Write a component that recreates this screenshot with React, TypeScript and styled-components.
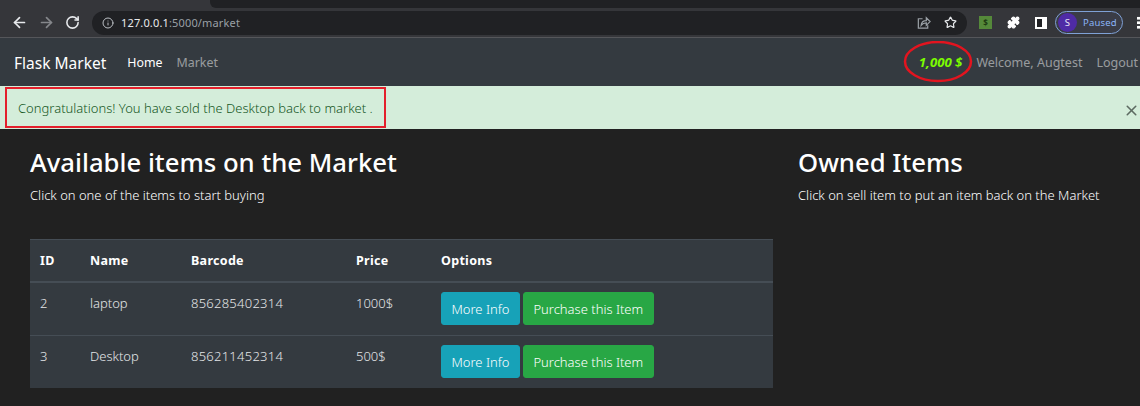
import { FC } from "react";
import styled, { createGlobalStyle } from "styled-components";
import { ArrowLeft, ArrowRight, RotateCw, Info, Star, Puzzle, X } from "lucide-react";

const GlobalStyle = createGlobalStyle`
	html, body {
		margin: 0;
		padding: 0;
		height: 406px;
		overflow: hidden;
		background-color: #212121;
		font-family: "Noto Sans", "Open Sans", sans-serif;
		color: #fff;
	}
	* {
		box-sizing: border-box;
	}
`;

const TabStrip = styled.div`
	height: 8px;
	display: flex;
	background-color: #35363a;
`;

const ActiveTab = styled.div`
	margin-left: 210px;
	background-color: #202124;
	border-radius: 0 0 0 6px;
	flex: 1;
`;

const Toolbar = styled.div`
	height: 30px;
	display: flex;
	align-items: center;
	padding: 0 0 0 11px;
	background-color: #35363a;
	border-bottom: 1px solid #55565a;
	overflow: hidden;
	& > * {
		flex-shrink: 0;
	}
`;

const NavIcons = styled.div`
	display: flex;
	align-items: center;
	gap: 10px;
	width: 81px;
	color: #e8eaed;
`;

const Omnibox = styled.div`
	width: 875px;
	height: 24px;
	display: flex;
	align-items: center;
	padding: 0 10px 0 10px;
	border-radius: 12px;
	background-color: #202124;
	color: #bdc1c6;
`;

const Url = styled.span`
	margin-left: 7px;
	flex: 1;
	font-size: 11px;
	letter-spacing: 0.15px;
	color: #9aa0a6;

	b {
		font-weight: 400;
		color: #e8eaed;
	}
`;

const OmniActions = styled.div`
	display: flex;
	align-items: center;
	gap: 13px;
`;

const Extensions = styled.div`
	display: flex;
	align-items: center;
	margin-left: 12px;
	gap: 15px;
	color: #fff;
`;

const ExtensionBadge = styled.div`
	width: 13px;
	height: 13px;
	display: flex;
	align-items: center;
	justify-content: center;
	font-size: 8px;
	font-weight: 700;
	color: #1d3b12;
	background-color: #55893a;
`;

const SidePanelIcon = styled.div`
	width: 12px;
	height: 12px;
	border: 2px solid #fff;
	border-right-width: 5px;
	background-color: #202124;
`;

const ProfilePill = styled.div`
	width: 68px;
	height: 23px;
	margin-left: 8px;
	display: flex;
	align-items: center;
	gap: 6px;
	padding-left: 2px;
	border: 1px solid #7fa1d6;
	border-radius: 12px;
	font-size: 9.5px;
	letter-spacing: 0.2px;
	color: #8ab4f8;
	background-color: #3a3c46;
`;

const ProfileAvatar = styled.div`
	width: 19px;
	height: 19px;
	display: flex;
	align-items: center;
	justify-content: center;
	border-radius: 50%;
	color: #e8e3f5;
	background-color: #4f2ba6;
`;

const KebabDots = styled.div`
	margin-left: 14px;
	width: 3px;
	height: 13px;
	background: radial-gradient(circle, #fff 1.4px, transparent 1.6px) 0 0 / 3px 4.5px;
`;

const Navbar = styled.nav`
	position: relative;
	height: 48px;
	display: flex;
	align-items: center;
	padding: 0 2px 0 14px;
	background-color: #343a40;
`;

const Brand = styled.a`
	font-size: 15.5px;
	color: #fff;
	margin-right: 21px;
	margin-top: 2px;
`;

const NavLink = styled.a<{ $active?: boolean }>`
	font-size: 12.4px;
	margin-top: 1px;
	color: ${(p) => (p.$active ? "#fff" : "rgba(255, 255, 255, 0.5)")};
	margin-right: ${(p) => (p.$active ? "14px" : "0")};
`;

const NavRight = styled.div`
	margin-left: auto;
	display: flex;
	align-items: center;
`;

const Budget = styled.span`
	position: relative;
	font-size: 13.2px;
	font-weight: 700;
	font-style: italic;
	color: #7cfc00;
	margin-right: 14px;
`;

const BudgetCircle = styled.svg`
	position: absolute;
	left: -16px;
	top: -12px;
`;

const NavMuted = styled.a`
	font-size: 12.5px;
	margin-top: 1px;
	color: rgba(255, 255, 255, 0.5);
	&:not(:last-child) {
		margin-right: 14px;
	}
`;

const Alert = styled.div`
	position: relative;
	height: 43px;
	display: flex;
	align-items: center;
	justify-content: space-between;
	padding: 0 0 0 18px;
	font-size: 13px;
	font-weight: 300;
	color: #155724;
	background-color: #d4edda;
`;

const AlertFrame = styled.div`
	position: absolute;
	left: 5px;
	top: 1px;
	width: 381px;
	height: 41px;
	border: 2px solid #e3202c;
`;

const CloseIcon = styled.span`
	display: flex;
	margin-top: 5px;
	color: #5d6b62;
`;

const Content = styled.main`
	display: flex;
	padding: 17px 0 0 30px;
`;

const LeftColumn = styled.section`
	width: 743px;
`;

const RightColumn = styled.section`
	margin-left: 25px;
`;

const Heading = styled.h2`
	margin: 0;
	font-size: 25.7px;
	line-height: 33px;
	font-weight: 500;
	color: #fff;
`;

const Hint = styled.p`
	margin: 7px 0 0;
	font-size: 13px;
	font-weight: 300;
	line-height: 18px;
	color: #fff;
`;

const Table = styled.table`
	width: 743px;
	margin-top: 35px;
	border-collapse: collapse;
	background-color: #343a40;
	font-size: 13px;
`;

const HeadCell = styled.th<{ $width: number }>`
	width: ${(p) => p.$width}px;
	height: 42px;
	padding: 0 10px;
	text-align: left;
	font-size: 12.5px;
	font-weight: 700;
	letter-spacing: 0.3px;
	border-top: 1px solid #454d55;
	border-bottom: 2px solid #454d55;
`;

const Row = styled.tr`
	&:not(:last-child) {
		border-bottom: 1px solid #454d55;
	}
	&:first-child td {
		height: 54px;
	}
	&:last-child td {
		height: 52px;
	}
`;

const Cell = styled.td<{ $spaced?: boolean }>`
	padding: 11px 10px 0;
	vertical-align: top;
	font-weight: 300;
	letter-spacing: ${(p) => (p.$spaced ? "0.25px" : "0")};
	color: #e4e6e8;
`;

const ActionCell = styled.td`
	padding: 0 10px;
	vertical-align: middle;
`;

const Actions = styled.div`
	display: flex;
	gap: 3px;
`;

const Button = styled.button<{ $color: string }>`
	height: 33px;
	padding: 0 9.5px;
	border: 1px solid ${(p) => p.$color};
	border-radius: 3px;
	font-family: inherit;
	font-size: 13px;
	font-weight: 300;
	color: #fff;
	background-color: ${(p) => p.$color};
`;

interface Item {
	id: number;
	name: string;
	barcode: string;
	price: string;
}

const items: Item[] = [
	{ id: 2, name: "laptop", barcode: "856285402314", price: "1000$" },
	{ id: 3, name: "Desktop", barcode: "856211452314", price: "500$" },
];

const columns: [string, number][] = [
	["ID", 50],
	["Name", 101],
	["Barcode", 165],
	["Price", 85],
	["Options", 342],
];

const ShareIcon: FC = () => (
	<svg width="15" height="15" viewBox="0 0 16 16" fill="none" stroke="#9aa0a6" strokeWidth="1.3">
		<path d="M7 4H2.500v10h10v-3" />
		<path d="M5.500 11c.3-3.200 2.600-5 5.500-5V3l4 4-4 4V8.300c-2.300 0-4.200 .8-5.500 2.700z" />
	</svg>
);

const BrowserChrome: FC = () => (
	<>
		<TabStrip>
			<ActiveTab />
		</TabStrip>
		<Toolbar>
			<NavIcons>
				<ArrowLeft size={17} strokeWidth={2.4} />
				<ArrowRight size={17} strokeWidth={2.4} color="#85878b" />
				<RotateCw size={15} strokeWidth={2.5} />
			</NavIcons>
			<Omnibox>
				<Info size={12} />
				<Url>
					<b>127.0.0.1</b>:5000/market
				</Url>
				<OmniActions>
					<ShareIcon />
					<Star size={13} strokeWidth={2.2} color="#e8eaed" />
				</OmniActions>
			</Omnibox>
			<Extensions>
				<ExtensionBadge>$</ExtensionBadge>
				<Puzzle size={13} fill="#fff" />
				<SidePanelIcon />
			</Extensions>
			<ProfilePill>
				<ProfileAvatar>S</ProfileAvatar>
				Paused
			</ProfilePill>
			<KebabDots />
		</Toolbar>
	</>
);

const App: FC = () => {
	return (
		<>
			<GlobalStyle />
			<BrowserChrome />
			<Navbar>
				<Brand>Flask Market</Brand>
				<NavLink $active>Home</NavLink>
				<NavLink>Market</NavLink>
				<NavRight>
					<Budget>
						1,000 $
						<BudgetCircle width="80" height="42" viewBox="0 0 80 42">
							<ellipse cx="35" cy="20.5" rx="33" ry="19.5" fill="none" stroke="#e3141f" strokeWidth="2.5" />
						</BudgetCircle>
					</Budget>
					<NavMuted>Welcome, Augtest</NavMuted>
					<NavMuted>Logout</NavMuted>
				</NavRight>
			</Navbar>
			<Alert>
				Congratulations! You have sold the Desktop back to market .
				<AlertFrame />
				<CloseIcon>
					<X size={17} strokeWidth={2.2} />
				</CloseIcon>
			</Alert>
			<Content>
				<LeftColumn>
					<Heading>Available items on the Market</Heading>
					<Hint>Click on one of the items to start buying</Hint>
					<Table>
						<thead>
							<tr>
								{columns.map(([title, width]) => (
									<HeadCell key={title} $width={width}>
										{title}
									</HeadCell>
								))}
							</tr>
						</thead>
						<tbody>
							{items.map((item) => (
								<Row key={item.id}>
									<Cell>{item.id}</Cell>
									<Cell>{item.name}</Cell>
									<Cell $spaced>{item.barcode}</Cell>
									<Cell>{item.price}</Cell>
									<ActionCell>
										<Actions>
											<Button $color="#17a2b8">More Info</Button>
											<Button $color="#28a745">Purchase this Item</Button>
										</Actions>
									</ActionCell>
								</Row>
							))}
						</tbody>
					</Table>
				</LeftColumn>
				<RightColumn>
					<Heading>Owned Items</Heading>
					<Hint>Click on sell item to put an item back on the Market</Hint>
				</RightColumn>
			</Content>
		</>
	);
};

export default App;
